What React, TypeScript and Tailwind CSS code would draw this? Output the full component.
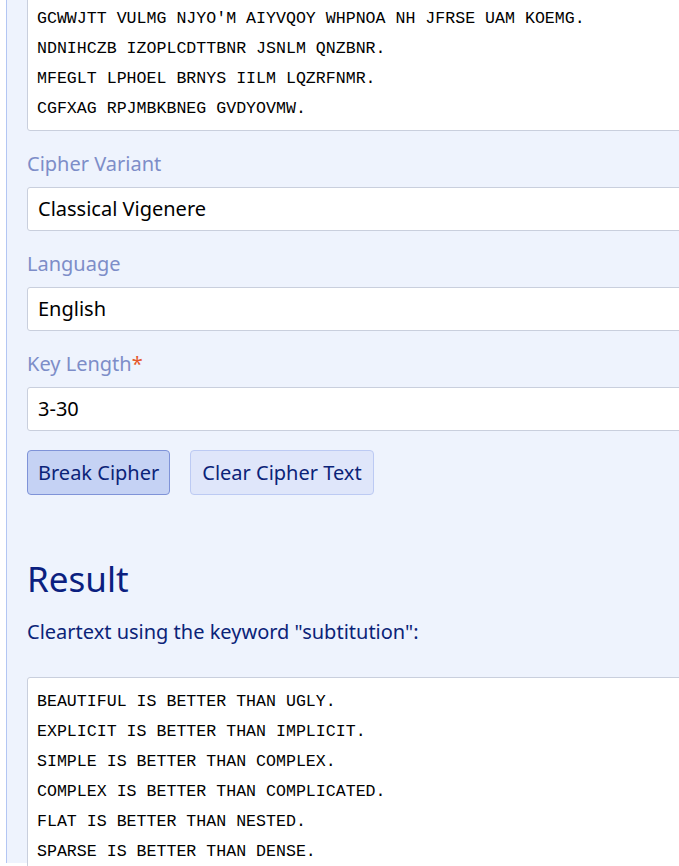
import React from "react";

const cipherLines = [
  "GCWWJTT VULMG NJYO'M AIYVQOY WHPNOA NH JFRSE UAM KOEMG.",
  "NDNIHCZB IZOPLCDTTBNR JSNLM QNZBNR.",
  "MFEGLT LPHOEL BRNYS IILM LQZRFNMR.",
  "CGFXAG RPJMBKBNEG GVDYOVMW.",
];

const clearLines = [
  "BEAUTIFUL IS BETTER THAN UGLY.",
  "EXPLICIT IS BETTER THAN IMPLICIT.",
  "SIMPLE IS BETTER THAN COMPLEX.",
  "COMPLEX IS BETTER THAN COMPLICATED.",
  "FLAT IS BETTER THAN NESTED.",
  "SPARSE IS BETTER THAN DENSE.",
];

const ui = { fontFamily: '"Noto Sans", "Open Sans", sans-serif' };
const mono = { fontFamily: '"Liberation Mono", "DejaVu Sans Mono", monospace' };

function TextBlock({ lines, className }: { lines: string[]; className?: string }) {
  return (
    <div
      className={
        "w-[720px] rounded-[3px] border border-[#c9cfdd] bg-white pl-[9px] text-[16.6px] leading-[30px] text-black " +
        (className ?? "")
      }
      style={mono}
    >
      {lines.map((l) => (
        <div key={l} className="whitespace-pre">
          {l}
        </div>
      ))}
    </div>
  );
}

function Field({ label, value, required }: { label: string; value: string; required?: boolean }) {
  return (
    <div>
      <div className="mt-[18px] mb-[8px] text-[20px] leading-[30px] text-[#7d8dc8]">
        {label}
        {required && <span className="text-[#e5582b]">*</span>}
      </div>
      <div className="flex h-[44px] w-[720px] items-center rounded-[3px] border border-[#c9cfdd] bg-white pl-[10px] text-[20px] text-black">
        {value}
      </div>
    </div>
  );
}

export default function App() {
  return (
    <div className="h-[866px] w-[679px] overflow-hidden bg-white pl-[6px]" style={ui}>
      <div className="h-full border-l border-[#b3c6f3] bg-[#eef3fd] pl-[20px]">
        <TextBlock lines={cipherLines} className="-mt-[3px] pt-[6px] pb-[6px]" />

        <Field label="Cipher Variant" value="Classical Vigenere" />
        <Field label="Language" value="English" />
        <Field label="Key Length" value="3-30" required />

        <div className="mt-[19px] flex gap-[20px]">
          <button className="h-[45px] rounded-[4px] border border-[#7f93d8] bg-[#c5d2f4] px-[10px] text-[20px] text-[#0b2378]">
            Break Cipher
          </button>
          <button className="h-[45px] rounded-[4px] border border-[#bccaf3] bg-[#dfe6fa] px-[11px] text-[20px] text-[#0b2378]">
            Clear Cipher Text
          </button>
        </div>

        <h2 className="mt-[54px] text-[35px] leading-[60px] text-[#0b1f80]">Result</h2>
        <p className="mt-[8px] text-[20px] leading-[30px] text-[#0b2378]">
          Cleartext using the keyword "subtitution":
        </p>

        <TextBlock lines={clearLines} className="mt-[30px] pt-[9px] pb-[8px]" />
      </div>
    </div>
  );
}
